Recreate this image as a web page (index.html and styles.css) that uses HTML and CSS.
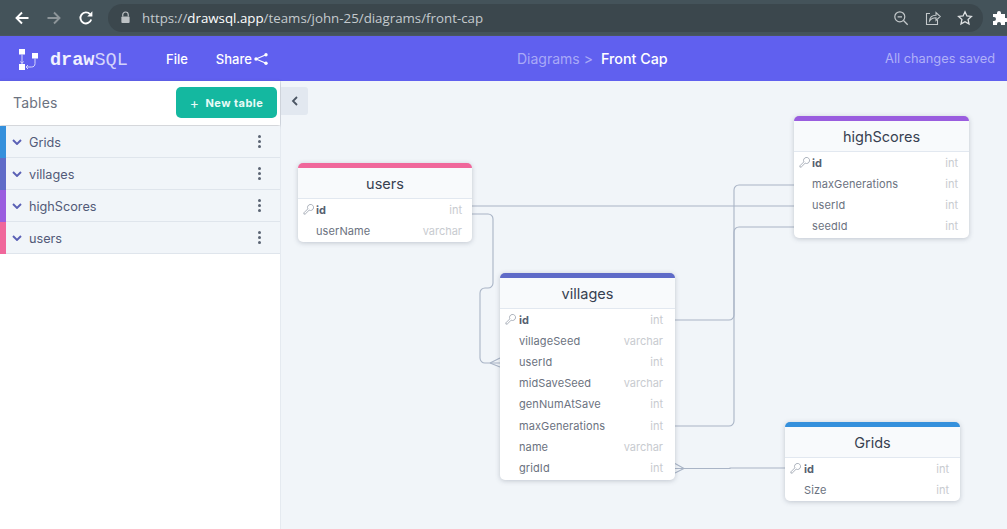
FILE: index.html
```html
<!DOCTYPE html>
<html lang="en">
<head>
<meta charset="utf-8">
<title>Front Cap - drawSQL</title>
<link rel="stylesheet" href="styles.css">
</head>
<body>
<div class="chrome">
  <svg class="nav-icon" viewBox="0 0 16 16"><path d="M14.5 8H2.5M8 2.5 2.5 8 8 13.5" fill="none" stroke="#fff" stroke-width="1.9"/></svg>
  <svg class="nav-icon fwd" viewBox="0 0 16 16"><path d="M1.5 8h12M8 2.5 13.5 8 8 13.5" fill="none" stroke="#8d9599" stroke-width="1.9"/></svg>
  <svg class="nav-icon" viewBox="0 0 16 16"><path d="M13.2 9.5A5.5 5.5 0 1 1 12 4.2" fill="none" stroke="#fff" stroke-width="1.9"/><path d="M9.2 6.4h5.2V1.2z" fill="#fff"/></svg>
  <div class="omnibox">
    <svg class="lock" viewBox="0 0 12 14"><path d="M3 6V4a3 3 0 0 1 6 0v2" fill="none" stroke="#bcc1c4" stroke-width="1.3"/><rect x="1.5" y="6" width="9" height="7" rx="1" fill="#bcc1c4"/></svg>
    <span class="url">https://<b>drawsql.app</b>/teams/john-25/diagrams/front-cap</span>
    <svg class="omni-icon" viewBox="0 0 16 16"><circle cx="6.8" cy="6.8" r="5" fill="none" stroke="#c3c8ca" stroke-width="1.2"/><path d="M4.6 6.8h4.4M10.5 10.5l4.2 4.2" stroke="#c3c8ca" stroke-width="1.3"/></svg>
    <svg class="omni-icon" viewBox="0 0 16 16"><path d="M5 3.5H1.5v11h11V10" fill="none" stroke="#c3c8ca" stroke-width="1.1"/><path d="M4.5 11c.3-3.600 3-5.800 6.500-5.800V2.500l4.300 4-4.300 4V7.800c-2.800 0-5 1-6.500 3.200z" fill="none" stroke="#c3c8ca" stroke-width="1.1"/></svg>
    <svg class="omni-icon" viewBox="0 0 16 16"><path d="M8 1.800l1.900 4.100 4.500.5-3.300 3 .9 4.500L8 11.700l-4 2.200.9-4.500-3.300-3 4.500-.5z" fill="none" stroke="#dfe2e3" stroke-width="1.300"/></svg>
  </div>
  <svg class="puzzle" viewBox="0 0 16 16"><path d="M1 4h4V3a2 2 0 0 1 4 0v1h4v4h1a2 2 0 0 1 0 4h-1v3H9v-1a2 2 0 0 0-4 0v1H1v-4h1a2 2 0 0 0 0-4H1z" fill="#fff"/></svg>
</div>

<header class="topbar">
  <div class="brand">
    <svg class="logo" viewBox="0 0 21 21"><rect x="0" y="0" width="6" height="5.500" fill="#fff"/><rect x="0" y="15" width="6" height="6" fill="#fff"/><rect x="13" y="4" width="6" height="5.500" fill="#fff"/><path d="M3 5.500v9M1.500 12.500 3 14.500l1.500-2" fill="none" stroke="#d6d6fb" stroke-width="1"/><path d="M16 9.500v5c0 2.500-1.500 3.500-3.500 3.500H7M9 16l-2 2 2 2" fill="none" stroke="#d6d6fb" stroke-width="1"/></svg>
    <span class="wordmark"><b>draw</b>SQL</span>
  </div>
  <nav class="menu">
    <span class="menu-item">File</span>
    <span class="menu-item share">Share
      <svg class="share-icon" viewBox="0 0 14 12"><circle cx="2" cy="6" r="1.700" fill="#fff"/><circle cx="12" cy="1.800" r="1.700" fill="#fff"/><circle cx="12" cy="10.200" r="1.700" fill="#fff"/><path d="M12 1.800 2 6l10 4.200" fill="none" stroke="#fff" stroke-width="1.100"/></svg>
    </span>
  </nav>
  <div class="crumbs"><span class="crumb-dim">Diagrams &gt;</span><span class="crumb-now">Front Cap</span></div>
  <div class="saved">All changes saved</div>
</header>

<main class="workspace">
  <aside class="sidebar">
    <div class="side-head">
      <span class="side-title">Tables</span>
      <button class="new-table"><span class="plus">+</span>New table</button>
    </div>
    <ul class="table-list">
      <li class="table-item c-blue"><svg class="chev" viewBox="0 0 10 6"><path d="M1 1l4 4 4-4" fill="none" stroke="#5a60b5" stroke-width="1.900"/></svg><span class="item-name">Grids</span><span class="dots"><i></i><i></i><i></i></span></li>
      <li class="table-item c-indigo"><svg class="chev" viewBox="0 0 10 6"><path d="M1 1l4 4 4-4" fill="none" stroke="#5a60b5" stroke-width="1.900"/></svg><span class="item-name">villages</span><span class="dots"><i></i><i></i><i></i></span></li>
      <li class="table-item c-purple"><svg class="chev" viewBox="0 0 10 6"><path d="M1 1l4 4 4-4" fill="none" stroke="#5a60b5" stroke-width="1.900"/></svg><span class="item-name">highScores</span><span class="dots"><i></i><i></i><i></i></span></li>
      <li class="table-item c-pink"><svg class="chev" viewBox="0 0 10 6"><path d="M1 1l4 4 4-4" fill="none" stroke="#5a60b5" stroke-width="1.900"/></svg><span class="item-name">users</span><span class="dots"><i></i><i></i><i></i></span></li>
    </ul>
  </aside>

  <section class="canvas">
    <button class="collapse"><svg viewBox="0 0 8 10"><path d="M6 1 2 5l4 4" fill="none" stroke="#4b5563" stroke-width="1.800"/></svg></button>

    <svg class="wires" viewBox="0 0 1007 448">
      <g fill="none" stroke="#a9b4c6" stroke-width="1.100">
        <path d="M472 125H794"/>
        <path d="M472 133h16a5 5 0 0 1 5 5v64a5 5 0 0 1-5 5h-3a5 5 0 0 0-5 5v65a5 5 0 0 0 5 5h15"/>
        <path d="M490 282 500 277M490 282 500 286"/>
        <path d="M675 239h54a5 5 0 0 0 5-5V109a5 5 0 0 1 5-5h55"/>
        <path d="M675 345h54a5 5 0 0 0 5-5V151a5 5 0 0 1 5-5h55"/>
        <path d="M675 387.500H730V387H785"/>
        <path d="M675 382.500 684 387.500 675 392"/>
      </g>
    </svg>

    <article class="card card-users">
      <h3 class="card-title">users</h3>
      <div class="field"><svg class="key" viewBox="0 0 12 12"><path d="M5.300 5.300a3.300 3.300 0 1 1 1.400 1.400L2.400 11H1v-1.400z" fill="none" stroke="#9aa2ae" stroke-width=".9"/></svg><span class="fname pk">id</span><span class="ftype">int</span></div>
      <div class="field"><span class="fname">userName</span><span class="ftype">varchar</span></div>
    </article>

    <article class="card card-high">
      <h3 class="card-title">highScores</h3>
      <div class="field"><svg class="key" viewBox="0 0 12 12"><path d="M5.300 5.300a3.300 3.300 0 1 1 1.400 1.400L2.400 11H1v-1.400z" fill="none" stroke="#9aa2ae" stroke-width=".9"/></svg><span class="fname pk">id</span><span class="ftype">int</span></div>
      <div class="field"><span class="fname">maxGenerations</span><span class="ftype">int</span></div>
      <div class="field"><span class="fname">userId</span><span class="ftype">int</span></div>
      <div class="field"><span class="fname">seedId</span><span class="ftype">int</span></div>
    </article>

    <article class="card card-villages">
      <h3 class="card-title">villages</h3>
      <div class="field"><svg class="key" viewBox="0 0 12 12"><path d="M5.300 5.300a3.300 3.300 0 1 1 1.400 1.400L2.400 11H1v-1.400z" fill="none" stroke="#9aa2ae" stroke-width=".9"/></svg><span class="fname pk">id</span><span class="ftype">int</span></div>
      <div class="field"><span class="fname">villageSeed</span><span class="ftype">varchar</span></div>
      <div class="field"><span class="fname">userId</span><span class="ftype">int</span></div>
      <div class="field"><span class="fname">midSaveSeed</span><span class="ftype">varchar</span></div>
      <div class="field"><span class="fname">genNumAtSave</span><span class="ftype">int</span></div>
      <div class="field"><span class="fname">maxGenerations</span><span class="ftype">int</span></div>
      <div class="field"><span class="fname">name</span><span class="ftype">varchar</span></div>
      <div class="field"><span class="fname">gridId</span><span class="ftype">int</span></div>
    </article>

    <article class="card card-grids">
      <h3 class="card-title">Grids</h3>
      <div class="field"><svg class="key" viewBox="0 0 12 12"><path d="M5.300 5.300a3.300 3.300 0 1 1 1.400 1.400L2.400 11H1v-1.400z" fill="none" stroke="#9aa2ae" stroke-width=".9"/></svg><span class="fname pk">id</span><span class="ftype">int</span></div>
      <div class="field"><span class="fname">Size</span><span class="ftype">int</span></div>
    </article>
  </section>
</main>
</body>
</html>
```
FILE: styles.css
```css
* { box-sizing: border-box; }
html, body { margin: 0; padding: 0; height: 100%; overflow: hidden; }
body { width: 1007px; height: 529px; display: flex; flex-direction: column; font-family: Inter, "Liberation Sans", sans-serif; background: #f1f5f9; }

.chrome { height: 36px; flex: none; display: flex; align-items: center; padding: 0 0 0 14px; background: #44535a; border-bottom: 1px solid #4a565f; }
.nav-icon { width: 16px; height: 16px; flex: none; margin-right: 16px; }
.omnibox { width: 875px; height: 28px; margin-left: -2px; flex: none; display: flex; align-items: center; padding: 0 10px 0 12px; border-radius: 14px; background: #3b474d; }
.lock { width: 11px; height: 13px; margin-right: 11px; }
.url { flex: 1; font: 13.300px "Open Sans", sans-serif; color: #c4cacd; white-space: nowrap; }
.url b { font-weight: 400; color: #fff; }
.omni-icon { width: 16px; height: 16px; margin-left: 16px; }
.puzzle { width: 16px; height: 16px; margin-left: 9px; flex: none; }

.topbar { height: 45px; flex: none; display: flex; align-items: center; position: relative; background: #6060ef; color: #fff; }
.brand { display: flex; align-items: center; width: 166px; padding-left: 19px; }
.logo { width: 21px; height: 21px; margin: 2px 10px 0 0; }
.wordmark { font: 18.500px "Liberation Mono", monospace; color: #d3d3fa; padding-top: 3px; }
.wordmark b { color: #f1f1fe; }
.menu { display: flex; gap: 28px; font-size: 13px; font-weight: 500; }
.menu-item { display: flex; align-items: center; gap: 2px; }
.share-icon { width: 14px; height: 12px; }
.crumbs { position: absolute; left: 517px; top: 14px; display: flex; gap: 8px; font-size: 14px; line-height: 17px; }
.crumb-dim { color: #a9a9f7; }
.crumb-now { font-size: 14.300px; font-weight: 500; }
.saved { position: absolute; right: 12px; top: 15px; font-size: 12.800px; line-height: 16px; color: #b0b0f8; }

.workspace { flex: 1; display: flex; min-height: 0; }
.sidebar { width: 281px; flex: none; background: #fff; border-right: 1px solid #e5eaf0; }
.side-head { height: 44px; padding: 6px 3px 0 13px; display: flex; justify-content: space-between; background: #fff; box-shadow: 0 1px 3px rgba(60, 70, 90, .35); position: relative; }
.side-title { font-size: 14px; line-height: 32px; color: #6b7280; letter-spacing: .2px; }
.new-table { width: 101px; height: 31px; border: 0; padding: 0; border-radius: 5px; background: #14b8a0; color: #e8fbf7; font: 700 11px Inter, sans-serif; letter-spacing: .45px; display: flex; align-items: center; justify-content: center; }
.plus { font-size: 14px; font-weight: 400; margin-right: 6px; }
.table-list { list-style: none; margin: 1px 0 0; padding: 0; }
.table-item { height: 32px; display: flex; align-items: center; padding: 0 19px 0 6px; background: #f1f5f9; border-bottom: 1px solid #dfe5ec; position: relative; }
.table-item::before { content: ""; position: absolute; left: 0; top: 0; bottom: -1px; width: 6px; }
.c-blue::before { background: #3590dc; }
.c-indigo::before { background: #5f6bc8; }
.c-purple::before { background: #9a5ddf; }
.c-pink::before { background: #f0679b; }
.chev { width: 10px; height: 6px; margin: 0 7px 0 6px; flex: none; }
.item-name { flex: 1; padding-top: 1px; font-size: 12.700px; color: #525a78; }
.dots { display: flex; flex-direction: column; gap: 2px; width: 3px; }
.dots i { width: 3px; height: 3px; border-radius: 50%; background: #5b6473; }

.canvas { flex: 1; position: relative; background: #f1f5f9; }
.collapse { position: absolute; left: 0; top: 6px; width: 27px; height: 28px; padding: 0; border: 0; border-radius: 0 3px 3px 0; background: #e2e8f0; display: flex; align-items: center; justify-content: center; }
.collapse svg { width: 8px; height: 10px; }
.wires { position: absolute; left: -281px; top: 0; width: 1007px; height: 448px; }

.card { position: absolute; width: 175px; padding-bottom: 1px; border-radius: 5px; border-top: 5px solid; background: #fff; box-shadow: 0 1px 5px rgba(70, 80, 100, .28); }
.card-title { margin: 0; height: 31px; display: flex; align-items: center; justify-content: center; font-size: 14.500px; font-weight: 400; color: #374151; background: #f8fafc; border-bottom: 1px solid #e2e8f0; }
.field { height: 21.200px; display: flex; align-items: center; padding: 0 11px 0 18px; position: relative; font-size: 11px; }
.fname { flex: 1; color: #6b7280; letter-spacing: .1px; }
.fname.pk { font-weight: 700; color: #56606f; }
.ftype { color: #c8cbd0; }
.key { position: absolute; left: 5px; top: 5px; width: 11px; height: 11px; }
.card-users { left: 17px; top: 82px; border-color: #f0679b; width: 174px; }
.card-users .field { padding-right: 10px; }
.card-high { left: 513px; top: 35px; border-color: #9a5ddf; }
.card-villages { left: 219px; top: 192px; border-color: #5f6bc8; }
.card-villages .field { padding: 0 12px 0 19px; }
.card-grids { left: 504px; top: 341px; border-color: #3590dc; }
.card-grids .field { padding-left: 19px; }
```
